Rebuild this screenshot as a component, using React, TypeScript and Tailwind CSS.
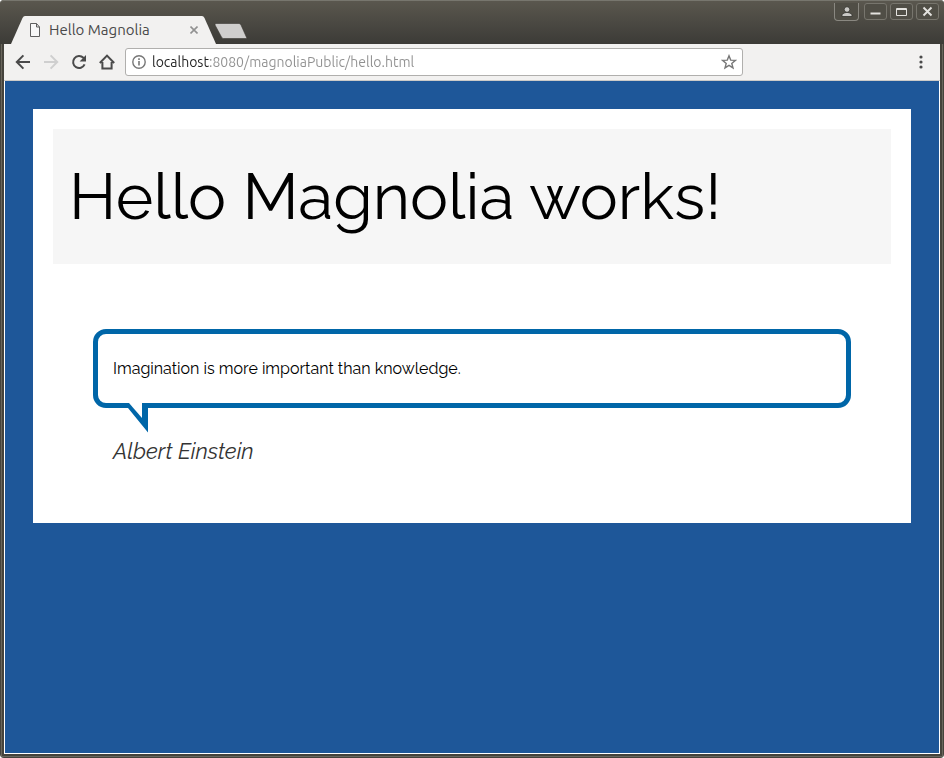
import { useState } from "react";

function BackIcon() {
  return (
    <svg width="16" height="16" viewBox="0 0 16 16" fill="none" stroke="currentColor" strokeWidth="2" aria-hidden="true">
      <path d="M15 8H2.2M8.4 1.4L1.8 8l6.6 6.6" />
    </svg>
  );
}

function ForwardIcon() {
  return (
    <svg width="16" height="16" viewBox="0 0 16 16" fill="none" stroke="currentColor" strokeWidth="2" aria-hidden="true">
      <path d="M1 8h12.8M7.6 1.4L14.2 8l-6.6 6.6" />
    </svg>
  );
}

function ReloadIcon() {
  return (
    <svg width="16" height="16" viewBox="0 0 16 16" aria-hidden="true">
      <path d="M13.6 10.4A6 6 0 1 1 12.4 3.8L13.6 5" fill="none" stroke="currentColor" strokeWidth="2" />
      <path d="M15 1v6.4H8.6z" fill="currentColor" />
    </svg>
  );
}

function HomeIcon() {
  return (
    <svg width="16" height="16" viewBox="0 0 16 16" fill="none" stroke="currentColor" strokeWidth="2" aria-hidden="true">
      <path d="M.8 9L8 1.6 15.2 9M3.4 8v6.4h9.2V8" />
    </svg>
  );
}

const toolButton = "flex h-7 w-7 items-center justify-center text-[#4a4a4a] disabled:text-[#cfcfcf]";
const windowButton =
  "flex h-[17px] w-[23px] items-center justify-center rounded-[3px] border border-[#77756d] bg-[#504e46] text-[#e4e3df]";

function TitleBar() {
  return (
    <header className="flex h-11 items-end justify-between rounded-t-[4px] border-t border-[#77766e] bg-linear-to-b from-[#5a574e] to-[#3c3b37] pr-[5px]">
      <div className="flex items-end pl-[11px]">
        <div className="relative h-7 w-[206px]">
          <svg className="absolute inset-0" width="206" height="28" viewBox="0 0 206 28" aria-hidden="true">
            <path d="M0 28L11.5 2Q12.5 0 14 0H191Q192.500 0 193.500 2L205 28Z" fill="#f2f1f0" />
          </svg>
          <div className="relative flex h-full items-center pl-[18px]">
            <svg width="12" height="14" viewBox="0 0 12 14" fill="none" stroke="#5f5f5f" aria-hidden="true">
              <path d="M1.500.5h6l3 3.500v9.500h-9z" fill="#f8f8f8" />
              <path d="M7.500.5V4h3" />
            </svg>
            <h1 className="ml-2 w-[137px] text-[15px] leading-5 text-[#4a4a4a]">Hello Magnolia</h1>
            <button type="button" aria-label="Close tab" className="flex h-4 w-4 items-center justify-center">
              <svg width="8" height="8" viewBox="0 0 8 8" stroke="#919191" strokeWidth="1.600" aria-hidden="true">
                <path d="M.5.5l7 7M7.500.5l-7 7" />
              </svg>
            </button>
          </div>
        </div>
        <button type="button" aria-label="New tab" className="mb-[5px] -ml-[3px]">
          <svg className="block" width="34" height="16" viewBox="0 0 34 16" aria-hidden="true">
            <path d="M2 .5H25Q26.500.5 27 2L33 15.500H9.500Q8 15.500 7.500 14L1 2Q.5.5 2 .5Z" fill="#cfcecd" stroke="#3a3934" strokeWidth=".6" />
          </svg>
        </button>
      </div>
      <div className="flex items-start gap-[3px] self-start pt-0.5">
        <button
          type="button"
          aria-label="Profile"
          className="mr-0.5 flex h-[18px] w-[25px] items-center justify-center rounded-b-[4px] border border-t-0 border-[#8a8881] bg-[#504e46]"
        >
          <svg width="12" height="12" viewBox="0 0 12 12" fill="#c9c8c5" stroke="#34332f" strokeWidth=".8" aria-hidden="true">
            <path d="M1 10.500V8.500Q3 6.600 5 6.500h2Q9 6.600 11 8.500v2z" />
            <circle cx="6" cy="3.500" r="2.800" />
          </svg>
        </button>
        <button type="button" aria-label="Minimize" className={windowButton}>
          <svg width="13" height="13" viewBox="0 0 13 13" fill="currentColor" aria-hidden="true">
            <path d="M1.500 7.500h10v2h-10z" />
          </svg>
        </button>
        <button type="button" aria-label="Maximize" className={windowButton}>
          <svg width="13" height="13" viewBox="0 0 13 13" fill="none" stroke="currentColor" aria-hidden="true">
            <path d="M1.500 3.500h10v7h-10zM1.500 4.500h10" />
          </svg>
        </button>
        <button type="button" aria-label="Close window" className={windowButton}>
          <svg width="11" height="11" viewBox="0 0 11 11" stroke="currentColor" strokeWidth="1.900" aria-hidden="true">
            <path d="M1.500 1.500l8 8M9.500 1.500l-8 8" />
          </svg>
        </button>
      </div>
    </header>
  );
}

function Toolbar() {
  const [address, setAddress] = useState("localhost:8080/magnoliaPublic/hello.html");
  return (
    <nav aria-label="Browser" className="flex h-[37px] items-center border-b border-[#cdcbc8] bg-[#f2f1f0] px-[5px]">
      <button type="button" aria-label="Back" className={toolButton}><BackIcon /></button>
      <button type="button" aria-label="Forward" disabled className={toolButton}><ForwardIcon /></button>
      <button type="button" aria-label="Reload" className={toolButton}><ReloadIcon /></button>
      <button type="button" aria-label="Home" className={toolButton}><HomeIcon /></button>
      <div className="mr-[164px] ml-1 flex h-7 flex-1 items-center rounded-[3px] border border-[#b0afad] bg-white pr-[5px] pl-1.5">
        <svg width="14" height="14" viewBox="0 0 14 14" aria-hidden="true">
          <circle cx="7" cy="7" r="6.200" fill="none" stroke="#777" strokeWidth="1.400" />
          <path d="M6.200 6h1.600v4.500H6.200zM6.200 3.300h1.600v1.600H6.200z" fill="#777" />
        </svg>
        <input
          type="text"
          aria-label="Address"
          value={address}
          onChange={(event) => setAddress(event.target.value)}
          className="ml-1.5 min-w-0 flex-1 bg-[linear-gradient(to_right,#222_58px,#909090_58px)] bg-clip-text text-[14px] leading-5 text-transparent outline-none"
        />
        <button type="button" aria-label="Bookmark this page">
          <svg className="block" width="16" height="16" viewBox="0 0 16 16" fill="none" stroke="#777" strokeWidth="1.400" aria-hidden="true">
            <path d="M8 1.800l1.700 4.300 4.700.3-3.600 3 1.200 4.500L8 11.400 4 13.900l1.200-4.500-3.600-3 4.700-.3z" />
          </svg>
        </button>
      </div>
      <button type="button" aria-label="Menu" className={toolButton}>
        <svg width="4" height="14" viewBox="0 0 4 14" fill="currentColor" aria-hidden="true">
          <circle cx="2" cy="2" r="1.600" />
          <circle cx="2" cy="7" r="1.600" />
          <circle cx="2" cy="12" r="1.600" />
        </svg>
      </button>
    </nav>
  );
}

function Quote() {
  return (
    <figure className="mx-10 mt-[65px] mb-9">
      <blockquote className="relative rounded-[13px] border-[5px] border-[#0066a8] px-[15px] py-[22px]">
        <p className="text-[16px] leading-[25px] text-black">Imagination is more important than knowledge.</p>
        <svg className="absolute top-full left-[25px]" width="26" height="30" viewBox="0 0 26 30" aria-hidden="true">
          <path d="M0 0L5 5L25 29.500V0Z" fill="#0066a8" />
          <path d="M6 0H19V15Z" fill="white" />
        </svg>
      </blockquote>
      <figcaption className="mt-7 pl-5 text-[22px] leading-[31px] text-[#333] italic">Albert Einstein</figcaption>
    </figure>
  );
}

export default function App() {
  return (
    <div className="bg-white font-['Ubuntu','Open_Sans','Noto_Sans',sans-serif]">
      <div className="flex min-h-screen flex-col rounded-[4px] bg-[#45433c]">
        <TitleBar />
        <div className="mx-px mb-px flex flex-1 flex-col border-x border-b border-[#69665c] px-0.5 pb-0.5">
          <Toolbar />
          <main className="flex-1 border-x border-b border-white bg-[#1e5799] p-7 font-['Raleway','Lato',sans-serif]">
            <article className="bg-white p-5">
              <h2 className="bg-[#f6f6f6] px-4 py-[30px] text-[64px] leading-[75px] font-normal text-black">Hello Magnolia works!</h2>
              <Quote />
            </article>
          </main>
        </div>
      </div>
    </div>
  );
}
